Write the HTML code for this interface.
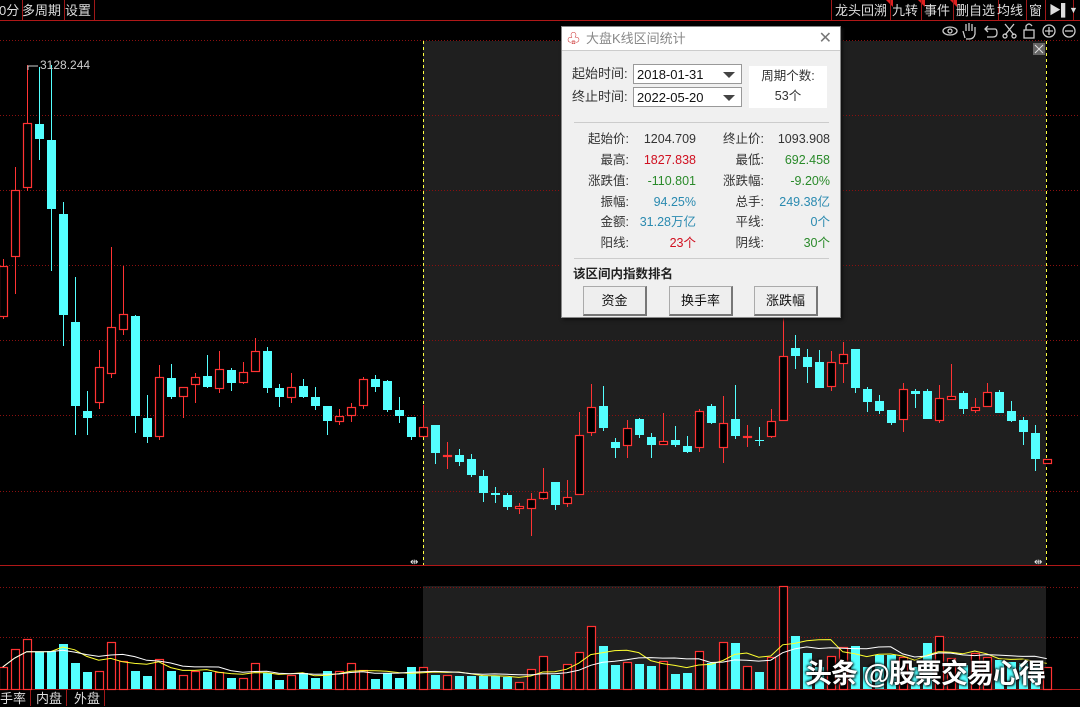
<!DOCTYPE html>
<html><head><meta charset="utf-8"><style>
*{margin:0;padding:0;box-sizing:border-box}
body{width:1080px;height:706px;background:#000;overflow:hidden;position:relative;font-family:"Liberation Sans","Noto Sans CJK SC",sans-serif;}
.tab{position:absolute;top:0;height:20px;color:#ddd;font-size:13px;line-height:21px;border-right:1px solid #a01818;padding:0 3px;}
.btab{position:absolute;top:690px;height:16px;color:#ddd;font-size:13px;line-height:17px;border-right:1px solid #a01818;padding:0 4px;}
#dlg{position:absolute;left:561px;top:26px;width:280px;height:292px;background:#f0f0f0;border:1px solid #888;box-shadow:2px 2px 3px #111;font-size:12px;color:#333}
#dlg .tt{height:24px;background:#fff;border-bottom:1px solid #ccc;color:#888;font-size:13px;line-height:24px;padding-left:24px;position:relative}
.cb{position:absolute;left:71px;width:109px;height:20px;background:#fff;border:1px solid #999;font-size:13px;line-height:19px;padding-left:3px;color:#111}
.cb:after{content:"";position:absolute;right:6px;top:7px;border-left:6px solid transparent;border-right:6px solid transparent;border-top:6px solid #444}
.lb{position:absolute;font-size:13px;color:#333;line-height:16px;height:16px}
.r{position:absolute;font-size:12.5px;text-align:right;line-height:16px;height:16px}
.btn{position:absolute;top:259px;width:64px;height:30px;background:#eee;border:1px solid #aaa;border-right:2px solid #777;border-bottom:2px solid #777;text-align:center;line-height:27px;font-size:13px;color:#111}
</style></head><body>
<svg id="s" width="1080" height="706" style="position:absolute;left:0;top:0"></svg>
<div class="tab" style="left:-4px">0分</div>
<div class="tab" style="left:19px">多周期</div>
<div class="tab" style="left:62px">设置</div>
<div class="tab" style="left:831px;border-left:1px solid #a01818">龙头回溯</div>
<div class="tab" style="left:889px">九转</div>
<div class="tab" style="left:921px">事件</div>
<div class="tab" style="left:953px">删自选</div>
<div class="tab" style="left:994px">均线</div>
<div class="tab" style="left:1026px">窗</div>
<div class="tab" style="left:1046px;font-size:12px">▶▌</div>
<div class="tab" style="left:1066px;border:none;font-size:9px">▼</div>
<div class="btab" style="left:-4px">手率</div>
<div class="btab" style="left:32px">内盘</div>
<div class="btab" style="left:70px">外盘</div>
<div style="position:absolute;left:40px;top:58px;color:#ccc;font-size:12px">3128.244</div>
<div id="dlg">
 <div class="tt"><span style="position:absolute;left:5px;top:0;color:#c33;font-size:13px">♧</span>大盘K线区间统计<span style="position:absolute;right:8px;top:0;color:#777;font-size:16px">✕</span></div>
 <div class="lb" style="left:10px;top:39px">起始时间:</div><div class="cb" style="top:37px">2018-01-31</div>
 <div class="lb" style="left:10px;top:62px">终止时间:</div><div class="cb" style="top:60px">2022-05-20</div>
 <div style="position:absolute;left:187px;top:39px;width:78px;height:42px;background:#fff;text-align:center;font-size:12.5px;line-height:20px">周期个数:<br>53个</div>
 <div style="position:absolute;left:12px;top:95px;width:255px;border-top:1px solid #ccc"></div>
 <div class="r" style="left:0;width:67px;top:104px">起始价:</div><div class="r" style="left:67px;width:67px;top:104px">1204.709</div>
 <div class="r" style="left:134px;width:68px;top:104px">终止价:</div><div class="r" style="left:202px;width:66px;top:104px">1093.908</div>
 <div class="r" style="left:0;width:67px;top:125px">最高:</div><div class="r" style="left:67px;width:67px;top:125px;color:#d01020">1827.838</div>
 <div class="r" style="left:134px;width:68px;top:125px">最低:</div><div class="r" style="left:202px;width:66px;top:125px;color:#2a8a2a">692.458</div>
 <div class="r" style="left:0;width:67px;top:146px">涨跌值:</div><div class="r" style="left:67px;width:67px;top:146px;color:#2a8a2a">-110.801</div>
 <div class="r" style="left:134px;width:68px;top:146px">涨跌幅:</div><div class="r" style="left:202px;width:66px;top:146px;color:#2a8a2a">-9.20%</div>
 <div class="r" style="left:0;width:67px;top:167px">振幅:</div><div class="r" style="left:67px;width:67px;top:167px;color:#2a8ab0">94.25%</div>
 <div class="r" style="left:134px;width:68px;top:167px">总手:</div><div class="r" style="left:202px;width:66px;top:167px;color:#2a8ab0">249.38亿</div>
 <div class="r" style="left:0;width:67px;top:187px">金额:</div><div class="r" style="left:67px;width:67px;top:187px;color:#2a8ab0">31.28万亿</div>
 <div class="r" style="left:134px;width:68px;top:187px">平线:</div><div class="r" style="left:202px;width:66px;top:187px;color:#2a8ab0">0个</div>
 <div class="r" style="left:0;width:67px;top:208px">阳线:</div><div class="r" style="left:67px;width:67px;top:208px;color:#d01020">23个</div>
 <div class="r" style="left:134px;width:68px;top:208px">阴线:</div><div class="r" style="left:202px;width:66px;top:208px;color:#2a8a2a">30个</div>
 <div style="position:absolute;left:12px;top:231px;width:255px;border-top:1px solid #ccc"></div>
 <div style="position:absolute;left:11px;top:236px;font-weight:bold;font-size:12.5px;color:#222">该区间内指数排名</div>
 <div class="btn" style="left:21px">资金</div><div class="btn" style="left:107px">换手率</div><div class="btn" style="left:192px">涨跌幅</div>
</div>
<div style="position:absolute;left:805px;top:652px;color:#fff;font-size:27px;font-weight:bold;text-shadow:1px 1px 2px #000,-1px -1px 2px #000;letter-spacing:-1px">头条 @股票交易心得</div>
<script>
var C=[['r',266,316,259,319],['r',190,256,167,294],['r',123,187,65,191],['c',124,139,67,160],['c',140,209,65,271],['c',214,315,202,346],['c',322,406,277,435],['c',411,418,391,435],['r',367,402,350,409],['r',327,373,247,378],['r',314,329,266,335],['c',316,416,315,433],['c',418,437,395,443],['r',377,436,365,440],['c',378,397,364,399],['r',387,396,387,418],['r',377,384,373,403],['c',376,387,355,388],['r',369,388,351,393],['c',370,383,368,391],['r',372,382,362,384],['r',351,371,338,371],['c',351,388,347,393],['c',388,397,384,407],['r',387,397,373,403],['c',386,397,379,398],['c',397,406,387,410],['c',406,421,406,435],['r',416,421,409,425],['r',407,415,403,422],['r',379,405,377,409],['c',379,387,375,392],['c',381,410,380,412],['c',410,416,397,423],['c',417,437,417,440],
['r',427,436,405,437],['c',425,453,425,464],['r',455,456,442,469],['c',455,462,449,466],['c',459,475,454,477],['c',476,493,470,502],['c',493,495,487,503],['c',495,507,493,510],['r',506,508,503,514],['r',499,508,493,536],['r',492,498,468,500],['c',482,505,482,510],['r',497,503,480,507],['r',435,494,412,494],['r',407,432,384,436],['c',406,428,386,431],['c',442,448,438,458],['r',428,445,420,458],['c',419,435,418,438],['c',437,445,433,458],['r',441,444,413,444],['c',440,445,426,447],['c',446,452,436,453],['r',411,447,409,452],['c',406,423,404,424],['r',423,447,396,463],['c',419,436,385,439],['r',436,437,425,447],['c',440,441,427,446],['r',421,436,409,438],['r',356,420,318,420],['c',348,356,335,369],['c',357,367,349,383],['c',362,388,350,388],['r',362,386,351,391],['r',354,363,342,383],['c',349,388,349,393],['c',389,402,387,412],['c',401,411,395,414],['c',410,423,410,425],['r',389,419,383,432],['c',391,394,389,408],['c',391,419,389,419],['r',398,420,385,423],['r',396,399,364,399],['c',393,409,391,414],['r',407,410,398,413],['r',392,406,383,407],['c',392,413,390,413],['c',411,421,401,422],['c',420,432,417,445],['c',433,459,425,471],['r',459,463,459,463]];
var V=[667,649,639,652,651,644,663,672,671,642,661,671,676,659,671,675,671,672,672,678,678,663,673,680,675,673,678,671,671,663,670,679,673,678,667,667,675,675,676,676,676,676,677,682,669,656,675,664,652,626,646,665,662,664,666,661,674,673,651,663,642,643,666,672,657,586,636,653,667,656,647,646,667,655,655,657,667,643,636,658,665,653,657,660,662,663,665,667];
var s='';
s+='<rect x="423" y="41" width="623" height="524" fill="#1f1f1f"/><rect x="423" y="586" width="623" height="104" fill="#1f1f1f"/>';
[40,115,190,265,340,415,491,587,637].forEach(function(y){s+='<line x1="0" y1="'+y+'.5" x2="1080" y2="'+y+'.5" stroke="#8a1010" stroke-dasharray="1,2"/>'});
s+='<line x1="0" y1="20.5" x2="1080" y2="20.5" stroke="#b01818"/><line x1="0" y1="565.5" x2="1080" y2="565.5" stroke="#b01818"/><line x1="0" y1="689.5" x2="1080" y2="689.5" stroke="#b01818"/>';
s+='<line x1="423.5" y1="41" x2="423.5" y2="565" stroke="#ffff40" stroke-dasharray="3,3"/><line x1="1046.5" y1="41" x2="1046.5" y2="565" stroke="#ffff40" stroke-dasharray="3,3"/>';
C.forEach(function(c,i){var x=Math.round(2.7+12*i),red=c[0]=='r',col=red?'#ff3333':'#54ffff';
s+='<line x1="'+(x+.5)+'" y1="'+c[3]+'" x2="'+(x+.5)+'" y2="'+c[4]+'" stroke="'+col+'" stroke-width="1"/>';
var h=Math.max(1,c[2]-c[1]);
if(red)s+='<rect x="'+(x-3.5)+'" y="'+(c[1]+.5)+'" width="8" height="'+h+'" fill="#000" stroke="#ff3333" stroke-width="1.2"/>';
else s+='<rect x="'+(x-4)+'" y="'+c[1]+'" width="9" height="'+h+'" fill="#54ffff"/>';
var vt=V[i];if(red)s+='<rect x="'+(x-3.5)+'" y="'+(vt+.5)+'" width="8" height="'+(689-vt)+'" fill="#000" stroke="#ff3333" stroke-width="1.2"/>';else s+='<rect x="'+(x-4)+'" y="'+vt+'" width="9" height="'+(689-vt)+'" fill="#54ffff"/>';});
function ma(n,col){var p='';for(var i=0;i<V.length;i++){var a=0,k=0;for(var j=Math.max(0,i-n+1);j<=i;j++){a+=V[j];k++}p+=(2.7+12*i).toFixed(1)+','+(a/k).toFixed(1)+' '}s+='<polyline points="'+p+'" fill="none" stroke="'+col+'" stroke-width="1"/>'}
ma(5,'#ffff30');ma(10,'#ffffff');
s+='<polyline points="38,66 28,66 28,70" fill="none" stroke="#ccc"/>';
s+='<rect x="1033" y="43" width="12" height="12" fill="#666"/><path d="M1035,45 L1043,53 M1043,45 L1035,53" stroke="#ddd"/>';
s+='<text x="410" y="565" fill="#eee" font-size="10">⇹</text><text x="1034" y="565" fill="#eee" font-size="10">⇹</text>';
var ic='fill="none" stroke="#ccc" stroke-width="1.3"';
s+='<ellipse cx="950" cy="31" rx="7" ry="4" '+ic+'/><circle cx="950" cy="31" r="2" '+ic+'/>';
s+='<path d="M965,38 L963,31 M966,31 L966,24 M969,31 L969,23 M972,31 L972,24 M975,31 L975,27 L975,34 Q974,39 969,39 L966,39" '+ic+'/>';
s+='<path d="M985,29 L995,29 Q997,29 997,33 Q997,37 993,37 L987,37 M988,26 L985,29 L988,32" '+ic+'/>';
s+='<path d="M1005,24 L1014,35 M1014,24 L1005,35" '+ic+'/><circle cx="1005" cy="36" r="2" '+ic+'/><circle cx="1014" cy="36" r="2" '+ic+'/>';
s+='<rect x="1024" y="30" width="10" height="8" '+ic+'/><path d="M1026,30 L1026,26 Q1029,22 1032,26" '+ic+'/>';
s+='<circle cx="1049" cy="31" r="6" '+ic+'/><path d="M1045,31 L1053,31 M1049,27 L1049,35" '+ic+'/>';
s+='<circle cx="1069" cy="31" r="6" '+ic+'/><path d="M1065,31 L1073,31" '+ic+'/>';
[886,918,950].forEach(function(x){s+='<path d="M'+x+',0 L'+(x+7)+',0 L'+(x+7)+',7 Z" fill="#e02020"/>'});
document.getElementById('s').innerHTML=s;
</script>
</body></html>
